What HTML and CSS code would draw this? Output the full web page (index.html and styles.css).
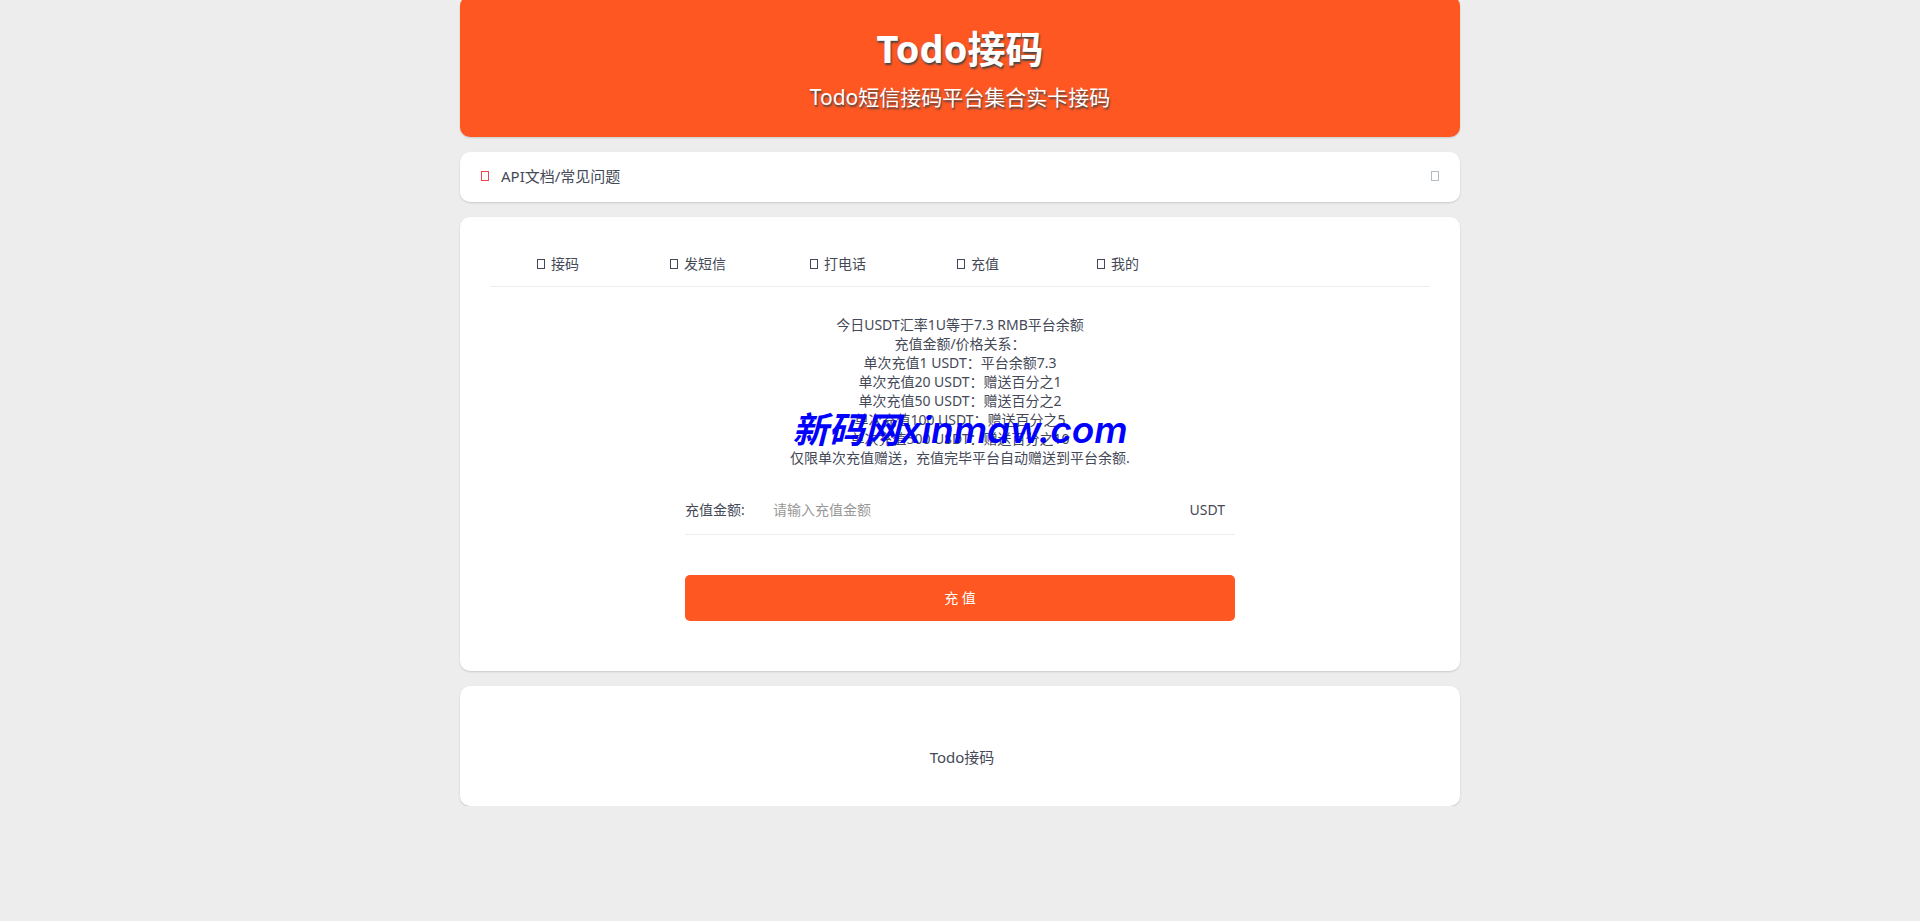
FILE: index.html
```html
<!DOCTYPE html>
<html lang="zh-CN">
<head>
<meta charset="utf-8">
<meta name="viewport" content="width=device-width, initial-scale=1">
<title>Todo接码</title>
<link rel="stylesheet" href="styles.css">
</head>
<body>
<div class="container">
  <header class="card banner">
    <h1 class="banner-title">Todo接码</h1>
    <p class="banner-subtitle">Todo短信接码平台集合实卡接码</p>
  </header>

  <a class="card notice" href="#docs">
    <svg class="icon icon-red" viewBox="0 0 8 11" aria-hidden="true"><rect x="0.5" y="0.5" width="7" height="9"/></svg>
    <span class="notice-text">API文档/常见问题</span>
    <svg class="icon icon-muted" viewBox="0 0 8 11" aria-hidden="true"><rect x="0.5" y="0.5" width="7" height="9"/></svg>
  </a>

  <main class="card panel">
    <nav class="tabs">
      <a class="tab" href="#receive"><svg class="icon" viewBox="0 0 8 11" aria-hidden="true"><rect x="0.5" y="0.5" width="7" height="9"/></svg>接码</a>
      <a class="tab" href="#send"><svg class="icon" viewBox="0 0 8 11" aria-hidden="true"><rect x="0.5" y="0.5" width="7" height="9"/></svg>发短信</a>
      <a class="tab" href="#call"><svg class="icon" viewBox="0 0 8 11" aria-hidden="true"><rect x="0.5" y="0.5" width="7" height="9"/></svg>打电话</a>
      <a class="tab" href="#recharge"><svg class="icon" viewBox="0 0 8 11" aria-hidden="true"><rect x="0.5" y="0.5" width="7" height="9"/></svg>充值</a>
      <a class="tab" href="#mine"><svg class="icon" viewBox="0 0 8 11" aria-hidden="true"><rect x="0.5" y="0.5" width="7" height="9"/></svg>我的</a>
    </nav>

    <div class="rates">
      <p class="rate">今日USDT汇率1U等于7.3 RMB平台余额</p>
      <p class="rate">充值金额/价格关系：</p>
      <p class="rate">单次充值1 USDT：平台余额7.3</p>
      <p class="rate">单次充值20 USDT：赠送百分之1</p>
      <p class="rate">单次充值50 USDT：赠送百分之2</p>
      <p class="rate">单次充值100 USDT：赠送百分之5</p>
      <p class="rate">单次充值500 USDT：赠送百分之10</p>
      <p class="rate">仅限单次充值赠送，充值完毕平台自动赠送到平台余额.</p>
      <div class="watermark">新码网<span class="watermark-latin">xinmaw.com</span></div>
    </div>

    <form class="form">
      <div class="field">
        <label class="field-label" for="amount">充值金额:</label>
        <input class="field-input" id="amount" type="text" placeholder="请输入充值金额">
        <span class="field-unit">USDT</span>
      </div>
      <button class="submit" type="button">充 值</button>
    </form>
  </main>

  <footer class="card footer">Todo接码</footer>
</div>
</body>
</html>
```
FILE: styles.css
```css
* {
  box-sizing: border-box;
}

body {
  margin: 0;
  background: #ededed;
  color: #454957;
  font-family: "Noto Sans", "Noto Sans CJK SC", sans-serif;
  font-size: 14px;
  line-height: 20px;
}

h1,
p {
  margin: 0;
}

a {
  color: inherit;
  text-decoration: none;
}

.container {
  display: flex;
  flex-direction: column;
  gap: 15px;
  max-width: 1000px;
  margin: -4px auto 0;
}

.card {
  background: #fff;
  border-radius: 10px;
  box-shadow: 0 1px 2px rgba(0, 0, 0, 0.15);
}

.banner {
  padding: 28px 20px 26px;
  background: #ff5722;
  color: #fff;
  text-align: center;
  text-shadow: 1px 2px 2px #444;
}

.banner-title {
  font-size: 38px;
  font-weight: 700;
  line-height: 48px;
}

.banner-subtitle {
  margin-top: 11px;
  font-size: 21px;
  font-weight: 400;
  line-height: 28px;
}

.icon {
  flex: none;
  width: 8px;
  height: 11px;
  fill: none;
  stroke: currentColor;
}

.icon-red {
  color: #f04848;
}

.icon-muted {
  color: #b4bcc0;
}

.notice {
  display: flex;
  align-items: center;
  gap: 12px;
  padding: 14px 21px 16px;
  font-size: 15px;
}

.notice-text {
  flex: 1;
}

.panel {
  padding: 30px 30px 50px;
}

.tabs {
  display: flex;
  border-bottom: 1px solid #eee;
}

.tab {
  display: flex;
  align-items: center;
  justify-content: center;
  gap: 6px;
  width: 140px;
  padding: 7px 4px 12px 0;
}

.rates {
  position: relative;
  margin-top: 28px;
  text-align: center;
}

.rate {
  line-height: 19px;
}

.watermark {
  position: absolute;
  top: 91px;
  left: 0;
  right: 0;
  color: #00f;
  font-size: 36px;
  font-style: italic;
  font-weight: 700;
  line-height: 48px;
  white-space: nowrap;
}

.watermark-latin {
  font-family: Inter, sans-serif;
  font-size: 37px;
  font-weight: 600;
}

.form {
  max-width: 550px;
  margin: 18px auto 0;
}

.field {
  display: flex;
  align-items: center;
  height: 50px;
  border-bottom: 1px solid #eee;
}

.field-label {
  width: 88px;
}

.field-input {
  flex: 1;
  min-width: 0;
  padding: 0;
  border: 0;
  outline: 0;
  background: none;
  color: inherit;
  font: inherit;
}

.field-input::placeholder {
  color: #999;
}

.field-unit {
  padding-right: 10px;
}

.submit {
  width: 100%;
  margin-top: 40px;
  padding: 13px;
  border: 0;
  border-radius: 5px;
  background: #ff5722;
  color: #fff;
  font: inherit;
}

.footer {
  padding: 61px 20px 39px 24px;
  font-size: 15px;
  text-align: center;
}
```
